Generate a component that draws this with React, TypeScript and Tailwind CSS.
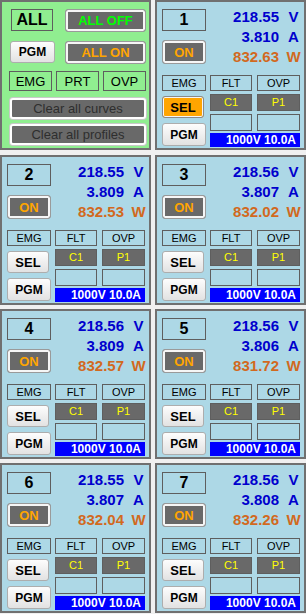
import React from "react";

type Channel = {
  id: number;
  volts: string;
  amps: string;
  watts: string;
  selected?: boolean;
};

const channels: Channel[] = [
  { id: 1, volts: "218.55", amps: "3.810", watts: "832.63", selected: true },
  { id: 2, volts: "218.55", amps: "3.809", watts: "832.53" },
  { id: 3, volts: "218.56", amps: "3.807", watts: "832.02" },
  { id: 4, volts: "218.56", amps: "3.809", watts: "832.57" },
  { id: 5, volts: "218.56", amps: "3.806", watts: "831.72" },
  { id: 6, volts: "218.55", amps: "3.807", watts: "832.04" },
  { id: 7, volts: "218.56", amps: "3.808", watts: "832.26" },
];

const font = "font-['Liberation_Sans',Arial,sans-serif]";

// flat labelled box, like a WinForms label with a border
const Box: React.FC<{ className?: string; children?: React.ReactNode }> = ({
  className = "",
  children,
}) => (
  <div
    className={`box-border flex items-center justify-center border border-[#5e5e5e] leading-none ${className}`}
  >
    {children}
  </div>
);

// dark button with white inner bevel
const DarkButton: React.FC<{ className?: string; children?: React.ReactNode }> = ({
  className = "",
  children,
}) => (
  <div
    className={`box-border flex items-center justify-center rounded-[3px] border border-[#9a9a9a] bg-[#696969] leading-none shadow-[inset_0_0_0_2px_#f6f6f6] ${className}`}
  >
    {children}
  </div>
);

// light system button
const LightButton: React.FC<{ className?: string; children?: React.ReactNode }> = ({
  className = "",
  children,
}) => (
  <div
    className={`box-border flex items-center justify-center rounded-[3px] border border-[#adadad] bg-gradient-to-b from-[#fdfdfd] to-[#e2e2e2] leading-none text-black ${className}`}
  >
    {children}
  </div>
);

const AllPanel: React.FC = () => (
  <div className="box-border h-[150px] w-[151px] border-2 border-[#707070] bg-[#90ee90]">
    <div className="mt-[7px] flex">
      <Box className="ml-[9px] h-[22px] w-[42px] text-[16px] font-bold text-black">ALL</Box>
      <DarkButton className="ml-[12px] h-[23px] w-[81px] text-[13px] font-bold text-[#00ff00]">
        ALL OFF
      </DarkButton>
    </div>
    <div className="mt-[9px] flex">
      <LightButton className="ml-[8px] h-[22px] w-[45px] text-[12px] font-bold text-[#000020]">
        PGM
      </LightButton>
      <DarkButton className="ml-[10px] h-[23px] w-[81px] text-[13px] font-bold text-[#ffa500]">
        ALL ON
      </DarkButton>
    </div>
    <div className="mt-[7px] flex gap-[4px] pl-[7px]">
      <Box className="h-[20px] w-[43px] text-[13px] text-black">EMG</Box>
      <Box className="h-[20px] w-[43px] text-[13px] text-black">PRT</Box>
      <Box className="h-[20px] w-[43px] text-[13px] text-black">OVP</Box>
    </div>
    <div className="ml-[8px] mt-[7px] box-border flex h-[21px] w-[136px] items-center justify-center rounded-[3px] border-2 border-white bg-[#696969] text-[13px] leading-none text-[#2e2e2e] shadow-[0_0_0_1px_#c9c9c9]">
      Clear all curves
    </div>
    <div className="ml-[8px] mt-[5px] box-border flex h-[21px] w-[136px] items-center justify-center rounded-[3px] border-2 border-white bg-[#696969] text-[13px] leading-none text-[#2e2e2e] shadow-[0_0_0_1px_#c9c9c9]">
      Clear all profiles
    </div>
  </div>
);

const Reading: React.FC<{ value: string; unit: string; color: string }> = ({
  value,
  unit,
  color,
}) => (
  <div className={`flex h-[20px] items-center text-[15px] font-bold leading-[20px] ${color}`}>
    <span className="w-[69px] text-right">{value}</span>
    <span className="ml-[7px] w-[15px] text-center">{unit}</span>
  </div>
);

const ChannelPanel: React.FC<{ ch: Channel }> = ({ ch }) => (
  <div className="box-border flex h-[150px] w-[151px] border-2 border-[#707070] bg-[#add8e6]">
    <div className="ml-[5px] flex w-[44px] flex-col">
      <Box className="mt-[7px] h-[22px] w-[44px] text-[16px] font-bold text-black">{ch.id}</Box>
      <DarkButton className="mt-[9px] h-[24px] w-[44px] text-[13px] font-bold text-[#ffa500]">
        ON
      </DarkButton>
      <Box className="mt-[11px] h-[16px] w-[44px] text-[11px] text-black">EMG</Box>
      {ch.selected ? (
        <div className="mt-[5px] box-border flex h-[22px] w-[42px] items-center justify-center rounded-[3px] border border-[#8a8a8a] bg-[#ffa500] text-[13px] font-bold leading-none text-black shadow-[inset_0_0_0_1px_#f5f5f5]">
          SEL
        </div>
      ) : (
        <LightButton className="mt-[5px] h-[22px] w-[42px] text-[13px] font-bold">SEL</LightButton>
      )}
      <LightButton className="mt-[5px] h-[23px] w-[44px] text-[12px] font-bold">PGM</LightButton>
    </div>
    <div className="ml-[4px] flex w-[91px] flex-col">
      <div className="mt-[5px]">
        <Reading value={ch.volts} unit="V" color="text-[#0000cd]" />
        <Reading value={ch.amps} unit="A" color="text-[#0000cd]" />
        <Reading value={ch.watts} unit="W" color="text-[#d2691e]" />
      </div>
      <div className="mt-[8px] flex gap-[5px]">
        <Box className="h-[16px] w-[42px] text-[11px] text-black">FLT</Box>
        <Box className="h-[16px] w-[43px] text-[11px] text-black">OVP</Box>
      </div>
      <div className="mt-[3px] flex gap-[5px]">
        <Box className="h-[17px] w-[42px] bg-[#696969] text-[11px] text-[#ffff00]">C1</Box>
        <Box className="h-[17px] w-[43px] bg-[#696969] text-[11px] text-[#ffff00]">P1</Box>
      </div>
      <div className="mt-[3px] flex gap-[5px]">
        <Box className="h-[17px] w-[42px]" />
        <Box className="h-[17px] w-[43px]" />
      </div>
      <div className="mt-[2px] flex h-[14px] w-[90px] items-center justify-end bg-[#0000ff] pr-[4px] text-[12px] font-bold leading-none text-white">
        1000V 10.0A
      </div>
    </div>
  </div>
);

export default function App() {
  return (
    <div className={`h-[614px] w-[306px] overflow-hidden bg-[#f0f0f0] ${font}`}>
      <div className="grid grid-cols-[151px_151px] grid-rows-[155px_154px_154px_150px] gap-x-[4px]">
        <AllPanel />
        {channels.map((ch) => (
          <ChannelPanel key={ch.id} ch={ch} />
        ))}
      </div>
    </div>
  );
}
